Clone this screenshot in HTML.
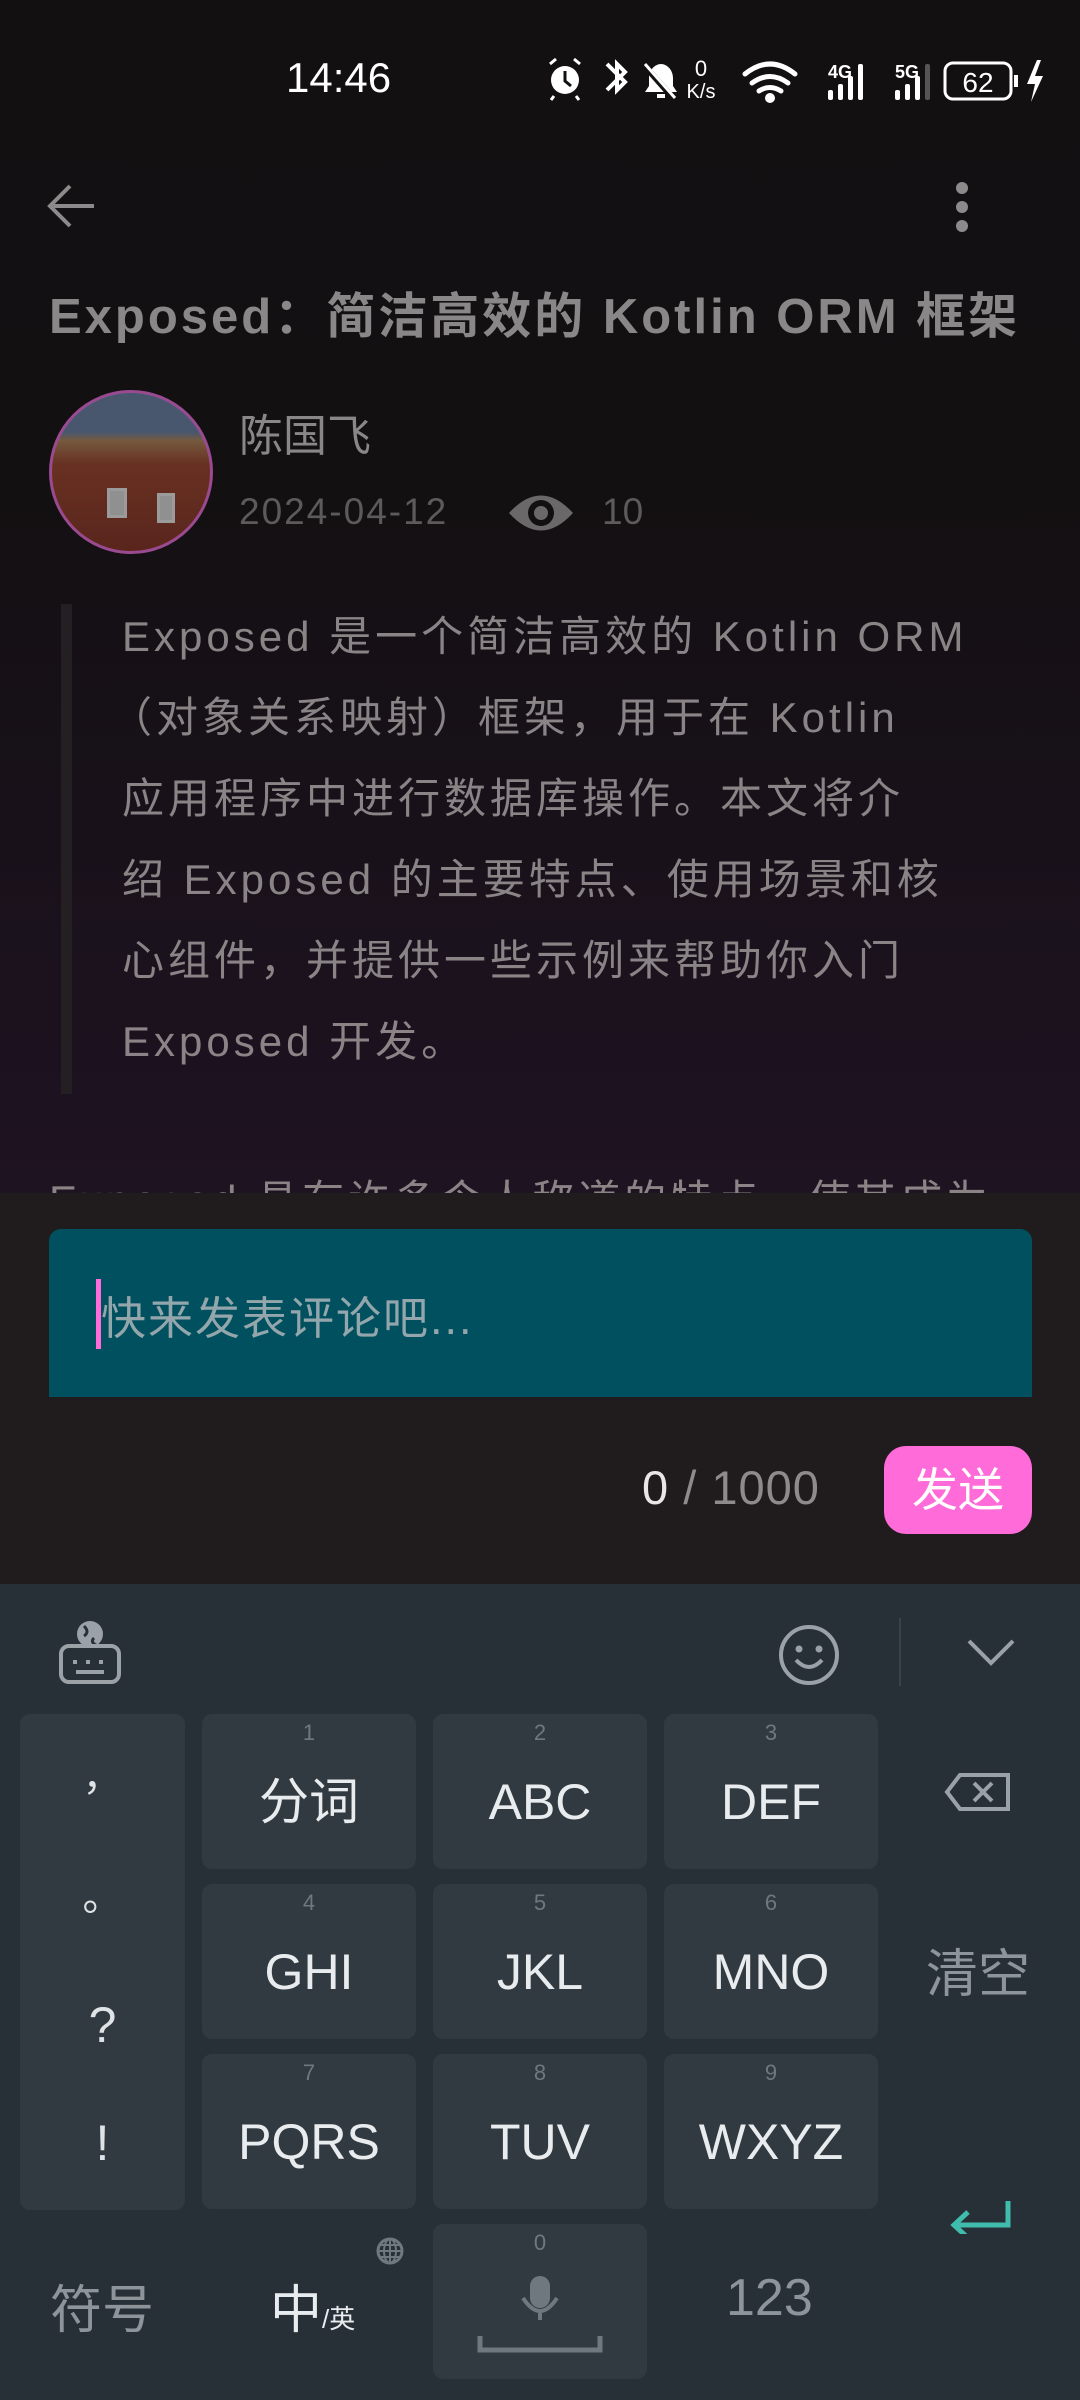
<!DOCTYPE html>
<html><head><meta charset="utf-8"><style>
*{margin:0;padding:0;box-sizing:border-box}
body{width:1080px;height:2400px;overflow:hidden;position:relative;font-family:"Liberation Sans","Noto Sans CJK SC",sans-serif;background:#121011}
.a{position:absolute;white-space:nowrap}
.top{position:absolute;left:0;top:0;width:1080px;height:1193px;background:linear-gradient(#121011 0,#131012 500px,#1d1220 1100px,#1e1321 1193px);overflow:hidden}
.q{color:#8a8486;font-size:42px;left:122px;letter-spacing:4px}
.key{position:absolute;background:#313a40;border-radius:10px;color:#e9ecee;font-size:50px;text-align:center}
.key .n{position:absolute;left:0;right:0;top:6px;font-size:22px;color:#6f787e}
.key .l{position:absolute;left:0;right:0;top:58px;line-height:60px}
</style></head><body>
<div class="top">
 <div class="a" style="left:286px;top:54px;font-size:42px;color:#fff">14:46</div>
 <svg class="a" style="left:545px;top:56px" width="505" height="50" viewBox="0 0 505 50">
  <g fill="#fff" stroke="#fff">
   <circle cx="20" cy="24" r="14" stroke-width="0"/>
   <path d="M20 15v10l6 5" stroke="#121011" stroke-width="3" fill="none"/>
   <path d="M5 8l6-5M35 8l-6-5M9 40l-3 4M31 40l3 4" stroke-width="3"/>
   <path d="M62 8l18 18-8 8V8l8 8-18 18" fill="none" stroke-width="4"/>
   <path d="M100 36h32l-4-6v-8c0-8-6-14-12-14s-12 6-12 14v8zM112 38h8v4h-8z" stroke-width="0"/>
   <path d="M98 8l30 34" stroke="#121011" stroke-width="6"/><path d="M100 8l30 34" stroke-width="3"/>
  </g>
  <text x="156" y="20" font-size="22" fill="#fff" text-anchor="middle" font-family="Liberation Sans">0</text>
  <text x="156" y="42" font-size="20" fill="#fff" text-anchor="middle" font-family="Liberation Sans">K/s</text>
  <g fill="none" stroke="#fff" stroke-width="5" stroke-linecap="round">
   <path d="M200 18q25-20 50 0M207 27q18-13 36 0M214 35q11-7 22 0"/>
  </g>
  <circle cx="225" cy="42" r="5" fill="#fff"/>
  <text x="283" y="22" font-size="18" font-weight="bold" fill="#fff" font-family="Liberation Sans">4G</text>
  <g fill="#fff"><rect x="283" y="34" width="5" height="10" rx="2"/><rect x="293" y="28" width="5" height="16" rx="2"/><rect x="303" y="20" width="5" height="24" rx="2"/><rect x="313" y="8" width="5" height="36" rx="2"/></g>
  <text x="350" y="22" font-size="18" font-weight="bold" fill="#fff" font-family="Liberation Sans">5G</text>
  <g fill="#fff"><rect x="350" y="34" width="5" height="10" rx="2"/><rect x="360" y="28" width="5" height="16" rx="2"/><rect x="370" y="20" width="5" height="24" rx="2"/><rect x="380" y="8" width="5" height="36" rx="2" fill="#555"/></g>
  <rect x="400" y="7" width="66" height="36" rx="8" fill="none" stroke="#fff" stroke-width="3"/>
  <rect x="469" y="19" width="4" height="12" fill="#fff"/>
  <text x="433" y="36" font-size="28" fill="#fff" text-anchor="middle" font-family="Liberation Sans">62</text>
  <path d="M492 4l-10 24h8l-4 18 12-26h-8l6-16z" fill="#fff"/>
 </svg>
 <svg class="a" style="left:44px;top:182px" width="54" height="48"><path d="M50 24H6M26 4L6 24l20 20" fill="none" stroke="#8d8a8b" stroke-width="4"/></svg>
 <svg class="a" style="left:950px;top:180px" width="24" height="54"><circle cx="12" cy="8" r="6" fill="#8d8a8b"/><circle cx="12" cy="27" r="6" fill="#8d8a8b"/><circle cx="12" cy="46" r="6" fill="#8d8a8b"/></svg>
 <div class="a" style="left:49px;top:277px;font-size:49px;font-weight:bold;color:#8a8788;letter-spacing:3px">Exposed：简洁高效的 Kotlin ORM 框架</div>
 <div class="a" style="left:49px;top:390px;width:164px;height:164px;border-radius:50%;border:3px solid #9a4a90;background:linear-gradient(180deg,#6f86a8 0,#6f86a8 25%,#b58a60 30%,#a04b35 45%,#8a3a2c 100%);overflow:hidden">
  <div style="position:absolute;left:55px;top:95px;width:20px;height:30px;background:#ddd;border:3px solid #eee"></div>
  <div style="position:absolute;left:105px;top:100px;width:18px;height:30px;background:#ddd;border:3px solid #eee"></div>
  <div style="position:absolute;inset:0;background:rgba(0,0,0,.35)"></div>
 </div>
 <div class="a" style="left:239px;top:400px;font-size:44px;color:#8a8788">陈国飞</div>
 <div class="a" style="left:239px;top:491px;font-size:37px;color:#5c5a5b;letter-spacing:2px">2024-04-12</div>
 <svg class="a" style="left:507px;top:488px" width="68" height="50"><path d="M2 25Q34-10 66 25Q34 60 2 25z" fill="#6a6869"/><circle cx="34" cy="25" r="13" fill="#131012"/><circle cx="34" cy="25" r="7" fill="#6a6869"/></svg>
 <div class="a" style="left:602px;top:491px;font-size:37px;color:#5c5a5b">10</div>
 <div class="a" style="left:61px;top:604px;width:11px;height:490px;background:#241f23"></div>
 <div class="a q" style="top:603px">Exposed 是一个简洁高效的 Kotlin ORM</div>
 <div class="a q" style="top:684px;left:110px">（对象关系映射）框架，用于在 Kotlin</div>
 <div class="a q" style="top:765px">应用程序中进行数据库操作。本文将介</div>
 <div class="a q" style="top:846px">绍 Exposed 的主要特点、使用场景和核</div>
 <div class="a q" style="top:927px">心组件，并提供一些示例来帮助你入门</div>
 <div class="a q" style="top:1008px">Exposed 开发。</div>
 <div class="a q" style="top:1167px;left:49px">Exposed 具有许多令人称道的特点，使其成为</div>
</div>
<div class="a" style="left:0;top:1193px;width:1080px;height:391px;background:#201b1c"></div>
<div class="a" style="left:49px;top:1229px;width:983px;height:168px;background:#01505f;border-radius:12px 12px 0 0"></div>
<div class="a" style="left:96px;top:1279px;width:5px;height:70px;background:#ff6bd8"></div>
<div class="a" style="left:101px;top:1282px;font-size:45px;color:#93a6ac;letter-spacing:2px">快来发表评论吧...</div>
<div class="a" style="left:642px;top:1460px;font-size:47px;color:#8f8b8c;letter-spacing:1px"><span style="color:#e8e6e6">0</span> / 1000</div>
<div class="a" style="left:884px;top:1446px;width:148px;height:88px;background:#ff6bd8;border-radius:22px;color:#fff;font-size:46px;text-align:center;line-height:88px">发送</div>
<div class="a" style="left:0;top:1584px;width:1080px;height:816px;background:#283037"></div>
<svg class="a" style="left:58px;top:1618px" width="64" height="66"><circle cx="32" cy="16" r="13" fill="#9aa2a8"/><path d="M26 8q6 6 0 10M36 20q-4 4 2 7" stroke="#283037" stroke-width="3" fill="none"/><rect x="3" y="28" width="58" height="36" rx="8" fill="none" stroke="#9aa2a8" stroke-width="4"/><path d="M15 44h4M28 44h4M41 44h4M18 54h28" stroke="#9aa2a8" stroke-width="4"/></svg>
<svg class="a" style="left:778px;top:1624px" width="62" height="62"><circle cx="31" cy="31" r="28" fill="none" stroke="#9aa2a8" stroke-width="4"/><circle cx="21" cy="25" r="3.5" fill="#9aa2a8"/><circle cx="41" cy="25" r="3.5" fill="#9aa2a8"/><path d="M18 36q13 14 26 0" fill="none" stroke="#9aa2a8" stroke-width="4"/></svg>
<div class="a" style="left:899px;top:1618px;width:2px;height:68px;background:#3a4249"></div>
<svg class="a" style="left:966px;top:1636px" width="50" height="32"><path d="M3 5l22 22 22-22" fill="none" stroke="#9aa2a8" stroke-width="4"/></svg>
<div class="key" style="left:20px;top:1714px;width:165px;height:496px">
 <div class="a" style="left:0;right:0;top:30px;font-size:40px;color:#dfe3e6">，</div>
 <div class="a" style="left:0;right:0;top:150px;font-size:40px;color:#dfe3e6">。</div>
 <div class="a" style="left:0;right:0;top:282px;font-size:50px;color:#dfe3e6">?</div>
 <div class="a" style="left:0;right:0;top:400px;font-size:50px;color:#dfe3e6">!</div>
</div>
<div class="key" style="left:202px;top:1714px;width:214px;height:155px"><div class="n">1</div><div class="l">分词</div></div>
<div class="key" style="left:433px;top:1714px;width:214px;height:155px"><div class="n">2</div><div class="l">ABC</div></div>
<div class="key" style="left:664px;top:1714px;width:214px;height:155px"><div class="n">3</div><div class="l">DEF</div></div>
<div class="key" style="left:202px;top:1884px;width:214px;height:155px"><div class="n">4</div><div class="l">GHI</div></div>
<div class="key" style="left:433px;top:1884px;width:214px;height:155px"><div class="n">5</div><div class="l">JKL</div></div>
<div class="key" style="left:664px;top:1884px;width:214px;height:155px"><div class="n">6</div><div class="l">MNO</div></div>
<div class="key" style="left:202px;top:2054px;width:214px;height:155px"><div class="n">7</div><div class="l">PQRS</div></div>
<div class="key" style="left:433px;top:2054px;width:214px;height:155px"><div class="n">8</div><div class="l">TUV</div></div>
<div class="key" style="left:664px;top:2054px;width:214px;height:155px"><div class="n">9</div><div class="l">WXYZ</div></div>
<div class="key" style="left:433px;top:2224px;width:214px;height:155px"><div class="n">0</div>
 <svg class="a" style="left:44px;top:50px" width="126" height="80"><rect x="53" y="2" width="20" height="32" rx="10" fill="#6f787e"/><path d="M46 24q17 26 34 0M63 38v8" fill="none" stroke="#6f787e" stroke-width="4"/><path d="M3 62v14h120V62" fill="none" stroke="#6f787e" stroke-width="5"/></svg>
</div>
<svg class="a" style="left:944px;top:1772px" width="68" height="40"><path d="M16 3h48v34H16L3 20z" fill="none" stroke="#9aa2a8" stroke-width="4"/><path d="M30 11l18 18M48 11L30 29" stroke="#9aa2a8" stroke-width="4"/></svg>
<div class="a" style="left:926px;top:1932px;font-size:52px;color:#8d959b">清空</div>
<svg class="a" style="left:948px;top:2198px" width="64" height="36"><path d="M60 3v24H8M20 14L6 27l14 13" fill="none" stroke="#3fbcae" stroke-width="5"/></svg>
<div class="a" style="left:50px;top:2268px;font-size:52px;color:#8d959b">符号</div>
<div class="a" style="left:270px;top:2268px;font-size:52px;color:#e9ecee">中<span style="font-size:26px">/英</span></div>
<svg class="a" style="left:375px;top:2236px" width="30" height="30"><circle cx="15" cy="15" r="12" fill="none" stroke="#6f787e" stroke-width="3"/><path d="M3 15h24M15 3v24M6 9h18M6 21h18" stroke="#6f787e" stroke-width="2"/><ellipse cx="15" cy="15" rx="6" ry="12" fill="none" stroke="#6f787e" stroke-width="2"/></svg>
<div class="a" style="left:726px;top:2268px;font-size:52px;color:#8d959b">123</div>
</body></html>
